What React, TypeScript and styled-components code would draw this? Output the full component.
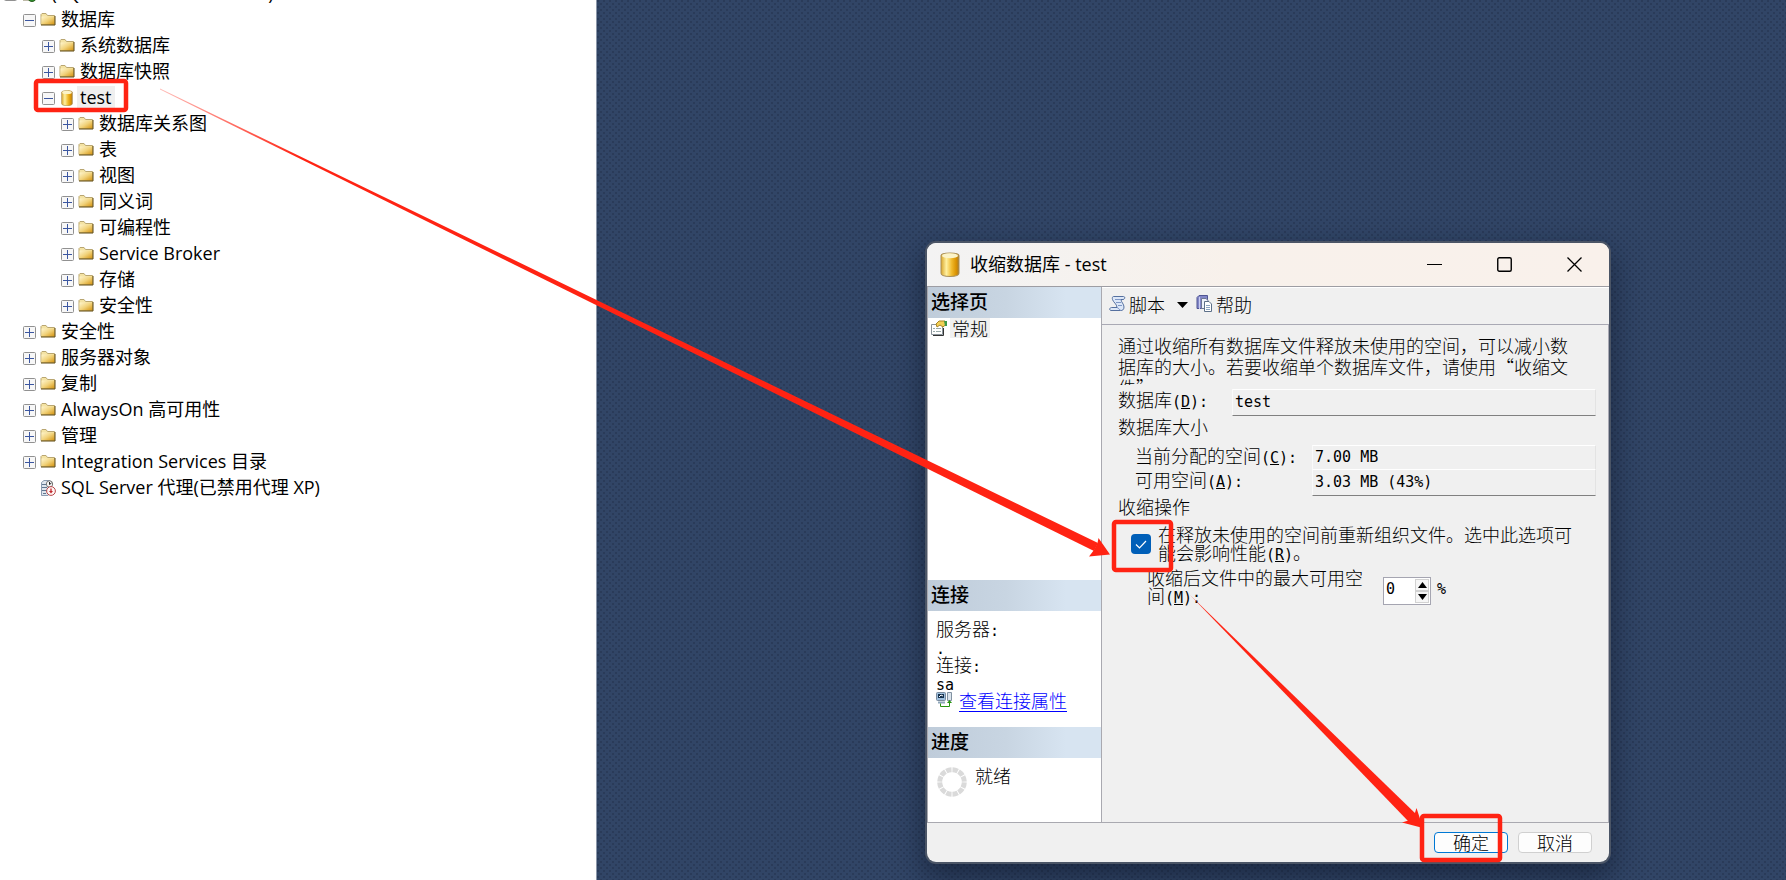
import React from 'react';
import styled, { createGlobalStyle } from 'styled-components';

const uiFont = '"Open Sans", "Noto Sans CJK SC", sans-serif';
const formFont = '"Noto Sans CJK SC", sans-serif';
const monoFont = '"DejaVu Sans Mono", monospace';
const red = '#ff2313';

const GlobalStyle = createGlobalStyle`
  * { box-sizing: border-box; }
  html, body { margin: 0; height: 100%; }
  #root { height: 100%; }
  body { font-family: ${uiFont}; color: #000; text-spacing-trim: space-all; overflow: hidden; }
  ul { list-style: none; margin: 0; padding: 0; }
  p { margin: 0; }
`;

const Screen = styled.div`
  position: relative;
  display: flex;
  height: 100%;
  min-height: 100vh;
  overflow: hidden;
`;

const Explorer = styled.nav`
  flex: 0 0 597px;
  background: #fff;
  border-right: 1px solid #8b97aa;
  overflow: hidden;
`;

const Tree = styled.ul`
  margin-top: -19px;
`;

const TreeRow = styled.li<{ $depth: number }>`
  display: flex;
  align-items: center;
  height: 26px;
  padding-left: ${(p) => 4 + p.$depth * 19}px;
  font-size: 18px;
  white-space: nowrap;
`;

const Toggle = styled.button`
  flex: none;
  display: block;
  width: 13px;
  height: 13px;
  padding: 0;
  border: 0;
  background: none;
  margin: 1px 4px 0 0;
  svg { display: block; }
`;

const ToggleGap = styled.span`
  flex: none;
  width: 17px;
`;

const TreeIcon = styled.span`
  flex: none;
  width: 16px;
  height: 16px;
  margin-right: 2px;
  svg { display: block; margin: 0 auto; }
`;

const TreeLabel = styled.span<{ $selected?: boolean }>`
  padding: 0 3px;
  height: 24px;
  line-height: 22px;
  background: ${(p) => (p.$selected ? '#efefef' : 'transparent')};
`;

const Desktop = styled.main`
  position: relative;
  flex: 1;
  background-color: #314566;
  background-image:
    radial-gradient(circle at 1px 1px, #2a3b59 1px, transparent 1px),
    radial-gradient(circle at 1px 1px, #2a3b59 1px, transparent 1px);
  background-size: 6px 6px;
  background-position: 0 0, 3px 3px;
`;

const Dialog = styled.section`
  position: absolute;
  left: 330px;
  top: 243px;
  width: 682px;
  height: 619px;
  display: flex;
  flex-direction: column;
  border-radius: 9px;
  background: #f0f0f0;
  box-shadow: 0 0 0 2px #4b5566, 0 12px 28px 4px rgba(10, 18, 36, 0.5);
  overflow: hidden;
`;

const TitleBar = styled.header`
  display: flex;
  align-items: center;
  height: 44px;
  padding: 0 0 1px 13px;
  background: linear-gradient(90deg, #f3f3f3, #f8f1eb 45%, #f9f1eb);
  border-bottom: 1px solid #9d9da3;
  svg { display: block; }
`;

const Title = styled.h1`
  flex: 1;
  margin: 0 0 0 10px;
  font-size: 18px;
  font-weight: 400;
  line-height: 26px;
`;

const WindowButton = styled.button`
  display: flex;
  justify-content: center;
  align-items: center;
  width: 70px;
  height: 40px;
  border: 0;
  padding: 0;
  background: none;
`;

const DialogBody = styled.div`
  flex: 1;
  display: flex;
  border-bottom: 1px solid #a9a9b0;
`;

const SidePane = styled.aside`
  display: flex;
  flex-direction: column;
  flex: 0 0 175px;
  background: #fff;
  border-left: 1px solid #a9a9b0;
  border-right: 1px solid #a9a9b0;
  font-family: ${formFont};
`;

const PaneHeading = styled.h2`
  flex: none;
  margin: 0;
  height: 31px;
  padding-left: 3px;
  font-size: 19px;
  font-weight: 500;
  line-height: 27px;
  background: linear-gradient(90deg, #bfccda, #c8d5e2 45%, #d7e4f1 80%);
`;

const PagesSection = styled.div`
  flex: 1;
  padding: 0 0 0 3px;
`;

const PageItem = styled.button`
  display: flex;
  align-items: center;
  gap: 3px;
  height: 20px;
  padding: 0;
  border: 0;
  background: none;
  font: 300 18px/20px ${formFont};
  color: #000;
  span { background: #f0f0f0; padding: 0 2px; }
`;

const ConnectionSection = styled.div`
  height: 116px;
  padding: 7px 0 0 8px;
  font-size: 18px;
  font-weight: 300;
`;

const InfoLabel = styled.p`
  height: 20px;
  line-height: 20px;
`;

const InfoValue = styled.p`
  height: 16px;
  line-height: 16px;
  overflow: hidden;
`;

const LinkRow = styled.div`
  display: flex;
  align-items: center;
  gap: 7px;
  height: 20px;
  a { color: #0000ff; text-underline-offset: 3px; line-height: 20px; }
`;

const ProgressSection = styled.div`
  display: flex;
  gap: 8px;
  height: 64px;
  padding: 6px 0 0 9px;
  font-size: 18px;
  font-weight: 300;
  line-height: 22px;
  svg { display: block; margin-top: 3px; }
`;

const MainPane = styled.div`
  flex: 1;
  display: flex;
  flex-direction: column;
  border-top: 1px solid #fff;
  font-family: ${formFont};
  font-size: 18px;
  font-weight: 300;
`;

const Toolbar = styled.div`
  display: flex;
  align-items: center;
  height: 37px;
  padding: 0 0 5px 7px;
  border-bottom: 1px solid #a9a9b4;
`;

const ToolButton = styled.button`
  display: flex;
  align-items: center;
  gap: 3px;
  padding: 0;
  border: 0;
  background: none;
  font: 300 18px/24px ${formFont};
  color: #000;
`;

const DropArrow = styled.button`
  width: 11px;
  height: 12px;
  margin: 0 8px 0 12px;
  padding: 0;
  border: 0;
  background: none;
  svg { display: block; }
`;

const Form = styled.form`
  flex: 1;
  display: flex;
  flex-direction: column;
  padding: 10px 12px 0 16px;
  border-right: 1px solid #a9a9b4;
`;

const Description = styled.p`
  width: 456px;
  height: 50px;
  margin-bottom: 4px;
  line-height: 21px;
  overflow: hidden;
`;

const Mono = styled.span`
  font-family: ${monoFont};
  font-size: 15px;
  font-weight: 400;
`;

const FieldRow = styled.div<{ $indent?: number; $height: number }>`
  display: flex;
  height: ${(p) => p.$height}px;
  padding-left: ${(p) => p.$indent || 0}px;
  line-height: 20px;
`;

const FieldLabel = styled.label<{ $width: number }>`
  flex: 0 0 ${(p) => p.$width}px;
`;

const ReadOnlyInput = styled.input<{ $last?: boolean }>`
  flex: 1;
  min-width: 0;
  height: 100%;
  padding: 0 2px 2px;
  border: 1px solid #fff;
  border-right-color: #e3e3e3;
  border-left-color: #fafafa;
  border-bottom: ${(p) => (p.$last ? '1px solid #808080' : '0')};
  border-radius: 0;
  background: #f0f0f0;
  font: 15px ${monoFont};
  color: #000;
  outline: 0;
`;

const GroupTitle = styled.h3<{ $height: number }>`
  margin: 0;
  height: ${(p) => p.$height}px;
  font-size: 18px;
  font-weight: 300;
  line-height: 20px;
`;

const CheckRow = styled.div`
  display: flex;
  gap: 7px;
  height: 43px;
  padding-left: 13px;
  line-height: 18px;
  label { width: 420px; }
`;

const CheckBox = styled.input`
  flex: none;
  appearance: none;
  width: 20px;
  height: 20px;
  margin: 9px 0 0;
  border-radius: 4px;
  background: #005fb8 url("data:image/svg+xml,%3Csvg xmlns='http://www.w3.org/2000/svg' width='20' height='20'%3E%3Cpath d='M5 10.500L8.500 14L15 7' fill='none' stroke='white' stroke-width='1.200'/%3E%3C/svg%3E");
`;

const SpinRow = styled.div`
  display: flex;
  padding-left: 29px;
  line-height: 18px;
  label { width: 220px; margin-right: 16px; }
`;

const Spinner = styled.div`
  display: flex;
  width: 48px;
  height: 28px;
  margin: 9px 6px 0 0;
  border: 1px solid #a5a5b1;
  background: #fff;
  input {
    width: 30px;
    padding: 0 0 4px 2px;
    border: 0;
    background: none;
    font: 15px ${monoFont};
    outline: 0;
  }
`;

const SpinButtons = styled.div`
  display: flex;
  flex-direction: column;
  width: 14px;
  margin: 1px;
  button {
    flex: 1;
    padding: 0;
    border: 1px solid #d2d2d2;
    background: #f6f6f6;
  }
  svg { display: block; margin: 0 auto; }
`;

const Percent = styled.span`
  margin-top: 9px;
`;

const Footer = styled.footer`
  display: flex;
  justify-content: flex-end;
  gap: 10px;
  height: 39px;
  padding: 9px 17px 0 0;
`;

const FooterButton = styled.button<{ $primary?: boolean }>`
  width: 74px;
  height: 21px;
  padding: 0;
  border: 1px solid ${(p) => (p.$primary ? '#0078d4' : '#d0d0d0')};
  border-radius: 4px;
  background: #fdfdfd;
  font: 300 18px/19px ${formFont};
  color: #000;
`;

const Markup = styled.svg`
  position: absolute;
  left: 0;
  top: 0;
  pointer-events: none;
`;

const Folder = () => (
  <svg width="16" height="16" viewBox="0 0 16 16">
    <defs>
      <linearGradient id="folder" x1="0" y1="0" x2="1" y2="1">
        <stop offset="0" stopColor="#fff6cf" />
        <stop offset="0.500" stopColor="#f1d27a" />
        <stop offset="1" stopColor="#d4920f" />
      </linearGradient>
    </defs>
    <path d="M1 12.500V2.500L2 1.500H6L7.500 3.500H14.500V12.500Z" fill="#f4e3a4" stroke="#b9a671" />
    <path d="M1.500 4.500H14.500V12.500H1.500Z" fill="url(#folder)" />
    <path d="M15 4V13H1" fill="none" stroke="#5e480f" />
  </svg>
);

const Cylinder = ({ width, height }: { width: number; height: number }) => (
  <svg width={width} height={height} viewBox="0 0 20 24" preserveAspectRatio="none">
    <defs>
      <linearGradient id="gold">
        <stop offset="0" stopColor="#d9a62c" />
        <stop offset="0.300" stopColor="#fff0a0" />
        <stop offset="0.600" stopColor="#f0b92a" />
        <stop offset="0.850" stopColor="#d99100" />
        <stop offset="1" stopColor="#a87b2b" />
      </linearGradient>
    </defs>
    <path d="M1 3.500C1 0 19 0 19 3.500V20.500C19 24.500 1 24.500 1 20.500Z" fill="url(#gold)" stroke="#a98f58" strokeWidth="1" />
    <ellipse cx="10" cy="3.600" rx="8" ry="2.400" fill="#fbf3c8" />
  </svg>
);

const ServerIcon = () => (
  <svg width="16" height="16" viewBox="0 0 16 16">
    <path d="M2 1H9V14H2Z" fill="#d8d2b8" stroke="#7d7450" />
    <circle cx="11" cy="11" r="4.500" fill="#2f8f2f" stroke="#2b5e1f" />
  </svg>
);

const AgentIcon = () => (
  <svg width="16" height="16" viewBox="0 0 16 16">
    <path d="M1.500 2.500L4 .500H10V13L8 15.500H1.500Z" fill="#dfe6ee" stroke="#8a9bb0" />
    <path d="M2 4.500H8M2 7.500H7M2 10.500H7M3 13.500H6" stroke="#5f7690" />
    <circle cx="9.500" cy="4" r="3.200" fill="#f5f5f5" stroke="#777" />
    <path d="M9.500 2V4.500L11.500 3" fill="none" stroke="#222" />
    <circle cx="11" cy="11" r="4.400" fill="#fff4f2" stroke="#b5474a" />
    <path d="M11 8.500V12" stroke="#c2272d" strokeWidth="1.300" />
    <path d="M9 11L11 13.500L13 11Z" fill="#c2272d" />
  </svg>
);

const ToggleMark = ({ open }: { open: boolean }) => (
  <svg width="13" height="13" viewBox="0 0 13 13">
    <rect x=".5" y=".5" width="12" height="12" rx="1" fill="#f7f7f7" stroke="#919191" />
    <path d={open ? 'M2 6.500H11' : 'M2 6.500H11M6.500 2V11'} stroke="#3b56a0" />
  </svg>
);

const PropertiesIcon = () => (
  <svg width="16" height="16" viewBox="0 0 16 16">
    <path d="M.5 4.500H11.500V14.500H.5Z" fill="#fff" stroke="#8b949b" />
    <path d="M12.500 8V15.500H2" fill="none" stroke="#333" />
    <path d="M2 8.500H4M5 8.500H10M2 11.500H4M5 11.500H10" stroke="#9aa" />
    <path d="M5 4L8 1H14L15.500 4L12 7L9 5L6 7Z" fill="#f2cf55" stroke="#a98424" />
    <path d="M13 1H16V6H14Z" fill="#3f9a4a" />
  </svg>
);

const ScriptIcon = () => (
  <svg width="17" height="17" viewBox="0 0 17 17">
    <path d="M4.500 1.500H14.500C16.500 1.500 16 4.500 14 4.500H12C12 7 15 9 15 12C15 15 13 15.500 12 15.500H2C0 15.500 .500 12.500 2.500 12.500H8C8 9 4 7 3.500 4.500C3 3 3.500 1.500 4.500 1.500Z" fill="#dce7f8" stroke="#55709f" />
    <path d="M6 4.500H12M7 7.500H12M9 10.500H13M8 12.500C10 13 10 15 12 15.500" fill="none" stroke="#7e97c6" />
  </svg>
);

const HelpIcon = () => (
  <svg width="17" height="17" viewBox="0 0 17 17">
    <path d="M1 2.500L3 .500H11.500V13.500H1Z" fill="#8287c8" stroke="#4f5593" />
    <path d="M3.500 2V14" stroke="#c8ccf0" />
    <path d="M5.500 3.500H10L12 5.500V13.500H5.500Z" fill="#eef2fb" stroke="#6e7794" />
    <path d="M8.500 6.500H13L15.500 9V16.500H8.500Z" fill="#fff" stroke="#5d7089" />
    <path d="M10 10.500H14M10 12.500H14M10 14.500H14" stroke="#8ba3c0" />
  </svg>
);

const ConnectionIcon = () => (
  <svg width="16" height="16" viewBox="0 0 16 16">
    <rect x=".5" y=".5" width="9" height="8" rx="1" fill="#9fc0de" stroke="#7c8d9e" />
    <path d="M2 2H8V6H2Z" fill="#16324e" />
    <path d="M3 5L5 3L7 4" stroke="#fff" fill="none" />
    <path d="M2 10.500H9" stroke="#8fa6ba" strokeWidth="2" />
    <path d="M11.500 .500H15.500V8.500H11.500Z" fill="#dbe4ec" stroke="#8292a2" />
    <path d="M4.500 11.500V14.500H13.500V10" fill="none" stroke="#27930f" />
    <path d="M11 11L13.500 8L16 11Z" fill="#27930f" />
  </svg>
);

const ProgressRing = () => (
  <svg width="30" height="30" viewBox="0 0 30 30">
    <circle cx="15" cy="15" r="12.300" fill="none" stroke="#dadada" strokeWidth="5" pathLength="120" strokeDasharray="8.500 1.500" strokeDashoffset="-0.750" />
  </svg>
);

type Node = { depth: number; label: string; kind?: 'server' | 'db' | 'agent'; open?: boolean; leaf?: boolean; id: string };

const nodes: Node[] = [
  { id: 'root', depth: 0, kind: 'server', open: true, label: '. (SQL Server 12.0.2000 - sa)' },
  { id: 'databases', depth: 1, open: true, label: '数据库' },
  { id: 'system', depth: 2, label: '系统数据库' },
  { id: 'snapshots', depth: 2, label: '数据库快照' },
  { id: 'test', depth: 2, kind: 'db', open: true, label: 'test' },
  { id: 'diagrams', depth: 3, label: '数据库关系图' },
  { id: 'tables', depth: 3, label: '表' },
  { id: 'views', depth: 3, label: '视图' },
  { id: 'synonyms', depth: 3, label: '同义词' },
  { id: 'programmability', depth: 3, label: '可编程性' },
  { id: 'broker', depth: 3, label: 'Service Broker' },
  { id: 'storage', depth: 3, label: '存储' },
  { id: 'db-security', depth: 3, label: '安全性' },
  { id: 'security', depth: 1, label: '安全性' },
  { id: 'objects', depth: 1, label: '服务器对象' },
  { id: 'replication', depth: 1, label: '复制' },
  { id: 'alwayson', depth: 1, label: 'AlwaysOn 高可用性' },
  { id: 'management', depth: 1, label: '管理' },
  { id: 'integration', depth: 1, label: 'Integration Services 目录' },
  { id: 'agent', depth: 1, kind: 'agent', leaf: true, label: 'SQL Server 代理(已禁用代理 XP)' },
];

const NodeIcon = ({ kind }: { kind?: Node['kind'] }) => {
  if (kind === 'server') return <ServerIcon />;
  if (kind === 'db') return <Cylinder width={12} height={16} />;
  if (kind === 'agent') return <AgentIcon />;
  return <Folder />;
};

const Key = ({ k, tail = ':' }: { k: string; tail?: string }) => (
  <Mono>(<u>{k}</u>){tail}</Mono>
);

export default function App() {
  return (
    <Screen lang="zh-CN">
      <GlobalStyle />
      <Explorer aria-label="对象资源管理器">
        <Tree>
          {nodes.map((n) => (
            <TreeRow key={n.id} $depth={n.depth}>
              {n.leaf ? <ToggleGap /> : (
                <Toggle type="button" aria-expanded={!!n.open} aria-label={n.open ? '折叠' : '展开'}>
                  <ToggleMark open={!!n.open} />
                </Toggle>
              )}
              <TreeIcon><NodeIcon kind={n.kind} /></TreeIcon>
              <TreeLabel $selected={n.kind === 'db'}>{n.label}</TreeLabel>
            </TreeRow>
          ))}
        </Tree>
      </Explorer>

      <Desktop>
        <Dialog role="dialog" aria-labelledby="dialog-title">
          <TitleBar>
            <Cylinder width={20} height={25} />
            <Title id="dialog-title">收缩数据库 - test</Title>
            <WindowButton type="button" aria-label="最小化">
              <svg width="15" height="15"><path d="M0 7.500H15" stroke="#000" /></svg>
            </WindowButton>
            <WindowButton type="button" aria-label="最大化">
              <svg width="15" height="15"><rect x=".75" y=".75" width="13.500" height="13.500" rx="1.500" fill="none" stroke="#000" strokeWidth="1.400" /></svg>
            </WindowButton>
            <WindowButton type="button" aria-label="关闭">
              <svg width="15" height="15"><path d="M.5 .5L14.500 14.500M14.500 .5L.5 14.500" stroke="#000" strokeWidth="1.300" /></svg>
            </WindowButton>
          </TitleBar>

          <DialogBody>
            <SidePane>
              <PaneHeading>选择页</PaneHeading>
              <PagesSection>
                <PageItem type="button"><PropertiesIcon /><span>常规</span></PageItem>
              </PagesSection>
              <PaneHeading>连接</PaneHeading>
              <ConnectionSection>
                <InfoLabel>服务器<Mono>:</Mono></InfoLabel>
                <InfoValue><Mono>.</Mono></InfoValue>
                <InfoLabel>连接<Mono>:</Mono></InfoLabel>
                <InfoValue><Mono>sa</Mono></InfoValue>
                <LinkRow><ConnectionIcon /><a href="#connection">查看连接属性</a></LinkRow>
              </ConnectionSection>
              <PaneHeading>进度</PaneHeading>
              <ProgressSection><ProgressRing />就绪</ProgressSection>
            </SidePane>

            <MainPane>
              <Toolbar>
                <ToolButton type="button"><ScriptIcon />脚本</ToolButton>
                <DropArrow type="button" aria-label="脚本选项">
                  <svg width="11" height="12"><path d="M0 4H11L5.500 10Z" /></svg>
                </DropArrow>
                <ToolButton type="button"><HelpIcon />帮助</ToolButton>
              </Toolbar>
              <Form>
                <Description>通过收缩所有数据库文件释放未使用的空间，可以减小数据库的大小。若要收缩单个数据库文件，请使用“收缩文件”</Description>
                <FieldRow $height={27}>
                  <FieldLabel htmlFor="db" $width={114}>数据库<Key k="D" /></FieldLabel>
                  <ReadOnlyInput id="db" readOnly defaultValue="test" $last />
                </FieldRow>
                <GroupTitle $height={29}>数据库大小</GroupTitle>
                <FieldRow $height={24} $indent={17}>
                  <FieldLabel htmlFor="used" $width={177}>当前分配的空间<Key k="C" /></FieldLabel>
                  <ReadOnlyInput id="used" readOnly defaultValue="7.00 MB" />
                </FieldRow>
                <FieldRow $height={27} $indent={17}>
                  <FieldLabel htmlFor="free" $width={177}>可用空间<Key k="A" /></FieldLabel>
                  <ReadOnlyInput id="free" readOnly defaultValue="3.03 MB (43%)" $last />
                </FieldRow>
                <GroupTitle $height={29}>收缩操作</GroupTitle>
                <CheckRow>
                  <CheckBox id="reorg" type="checkbox" defaultChecked />
                  <label htmlFor="reorg">在释放未使用的空间前重新组织文件。选中此选项可能会影响性能<Key k="R" tail="" />。</label>
                </CheckRow>
                <SpinRow>
                  <label htmlFor="max">收缩后文件中的最大可用空间<Key k="M" /></label>
                  <Spinner>
                    <input id="max" defaultValue="0" />
                    <SpinButtons>
                      <button type="button" aria-label="增加"><svg width="9" height="6"><path d="M0 6L4.500 0L9 6Z" /></svg></button>
                      <button type="button" aria-label="减少"><svg width="9" height="6"><path d="M0 0L4.500 6L9 0Z" /></svg></button>
                    </SpinButtons>
                  </Spinner>
                  <Percent><Mono>%</Mono></Percent>
                </SpinRow>
              </Form>
            </MainPane>
          </DialogBody>

          <Footer>
            <FooterButton type="button" $primary>确定</FooterButton>
            <FooterButton type="button">取消</FooterButton>
          </Footer>
        </Dialog>
      </Desktop>

      <Markup width="1786" height="880" aria-hidden="true">
        <defs>
          <linearGradient id="fade" gradientUnits="userSpaceOnUse" x1="160" y1="89" x2="300" y2="158">
            <stop offset="0" stopColor={red} stopOpacity="0.300" />
            <stop offset="1" stopColor={red} />
          </linearGradient>
        </defs>
        <g fill="none" stroke={red} strokeWidth="4.500">
          <rect x="36" y="81" width="90" height="29" rx="2" />
          <rect x="1114" y="522" width="57" height="48" rx="2" />
          <rect x="1422" y="816" width="78" height="44" rx="2" />
        </g>
        <path d="M160 88.500L1098 543L1094 551L160 89.500Z" fill="url(#fade)" />
        <path d="M1110 554.500L1098.500 538L1097.500 543L1094 550L1089 556.500Z" fill={red} />
        <path d="M1190 595L1417 815L1409 822Z" fill={red} />
        <path d="M1423 828L1416.500 808L1414 816L1410 820L1402 822.500Z" fill={red} />
      </Markup>
    </Screen>
  );
}
